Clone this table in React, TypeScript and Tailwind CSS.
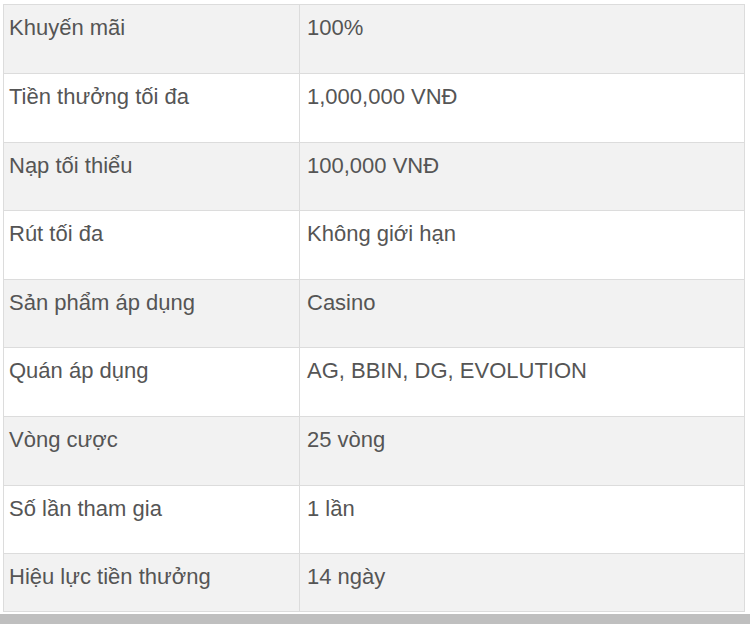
const rows: [string, string, string][] = [
  ['Khuyến mãi', '100%', 'h-[69px] bg-[#f2f2f2]'],
  ['Tiền thưởng tối đa', '1,000,000 VNĐ', 'h-[69px] bg-white'],
  ['Nạp tối thiểu', '100,000 VNĐ', 'h-[68px] bg-[#f2f2f2]'],
  ['Rút tối đa', 'Không giới hạn', 'h-[69px] bg-white'],
  ['Sản phẩm áp dụng', 'Casino', 'h-[68px] bg-[#f2f2f2]'],
  ['Quán áp dụng', 'AG, BBIN, DG, EVOLUTION', 'h-[69px] bg-white'],
  ['Vòng cược', '25 vòng', 'h-[69px] bg-[#f2f2f2]'],
  ['Số lần tham gia', '1 lần', 'h-[68px] bg-white'],
  ['Hiệu lực tiền thưởng', '14 ngày', 'h-[58px] bg-[#f2f2f2]'],
];

export default function App() {
  return (
    <div className="w-[750px] h-[624px] bg-white flex flex-col overflow-hidden" style={{ fontFamily: '"Liberation Sans", Arial, sans-serif' }}>
      <div className="pt-[4px] pl-[3px]">
        <div className="w-[742px] border-l border-r border-t border-[#dcdcdc]">
          {rows.map(([label, value, cls]) => (
            <div key={label} className={`flex border-b border-[#dcdcdc] ${cls}`}>
              <div className="w-[296px] shrink-0 border-r border-[#dcdcdc] pl-[5px] pt-[10px] text-[22px] leading-[26px] text-[#555]">
                {label}
              </div>
              <div className="flex-1 pl-[7px] pt-[10px] text-[22px] leading-[26px] text-[#555]">
                {value}
              </div>
            </div>
          ))}
        </div>
      </div>
      <div className="mt-[2px] flex-1 bg-[#bfbfbf]" />
    </div>
  );
}
